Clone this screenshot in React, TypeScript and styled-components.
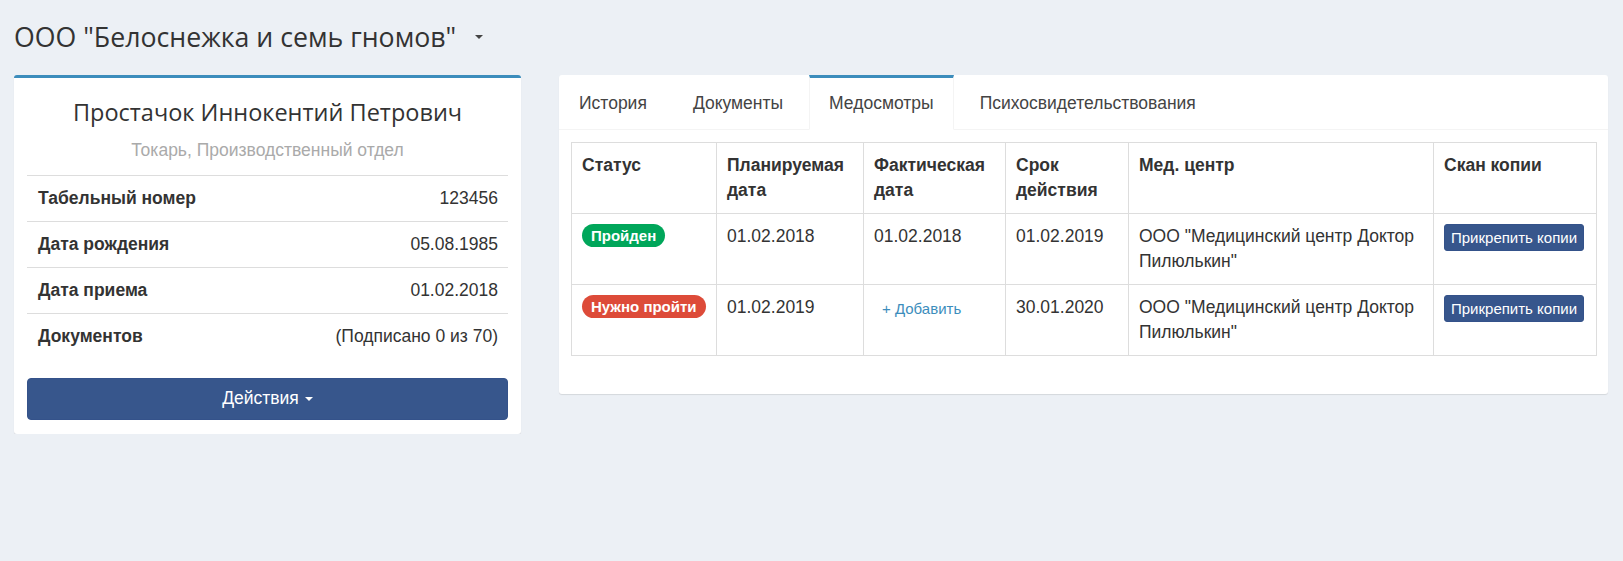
import styled, { createGlobalStyle } from 'styled-components';

const GlobalStyle = createGlobalStyle`
	body {
		margin: 0;
		background: #ecf0f5;
		font-family: 'Liberation Sans', Arial, sans-serif;
		font-size: 17.5px;
		color: #333;
	}
`;

const Page = styled.div`
	padding: 20px 15px 0 14px;
`;

const Header = styled.div`
	display: flex;
	align-items: center;
	height: 33px;
	margin-bottom: 22px;
`;

const Title = styled.h1`
	margin: 0;
	font-family: 'Open Sans', 'Noto Sans', sans-serif;
	font-weight: 400;
	font-size: 26.7px;
	line-height: 33px;
	color: #333;
`;

const Caret = styled.span<{ $color?: string; $size?: number }>`
	display: inline-block;
	width: 0;
	height: 0;
	border-top: ${(p) => p.$size || 4}px solid ${(p) => p.$color || '#444'};
	border-left: ${(p) => p.$size || 4}px solid transparent;
	border-right: ${(p) => p.$size || 4}px solid transparent;
	vertical-align: middle;
`;

const TitleCaret = styled.span`
	margin-left: 19px;
	display: flex;
	align-items: center;
`;

const Columns = styled.div`
	display: flex;
	align-items: flex-start;
	gap: 38px;
`;

const Box = styled.div<{ $accent?: boolean }>`
	background: #fff;
	border-radius: 3px;
	border-top: ${(p) => (p.$accent ? '3px solid #3c8dbc' : 'none')};
	box-shadow: 0 1px 1px rgba(0, 0, 0, 0.1);
`;

const ProfileBox = styled(Box)`
	width: 507px;
	flex: none;
	padding: 12px 13px 14px 13px;
	box-sizing: border-box;
`;

const Name = styled.h3`
	margin: 8px 0 0;
	text-align: center;
	font-family: 'Open Sans', 'Noto Sans', sans-serif;
	font-weight: 400;
	font-size: 23.5px;
	line-height: 28px;
	color: #333;
`;

const Position = styled.p`
	margin: 12px 0 12px;
	text-align: center;
	line-height: 25px;
	color: #aaa;
`;

const InfoList = styled.ul`
	list-style: none;
	margin: 0;
	padding: 0;
`;

const InfoRow = styled.li`
	display: flex;
	justify-content: space-between;
	padding: 10px 10px 10px 11px;
	line-height: 25px;
	border-top: 1px solid #ddd;
	&:last-child {
		padding-bottom: 9px;
	}
	b {
		font-weight: 700;
	}
`;

const ActionButton = styled.button`
	display: flex;
	align-items: center;
	justify-content: center;
	gap: 6px;
	width: 100%;
	margin-top: 20px;
	padding: 7px 12px 8px;
	font-family: inherit;
	font-size: 17.5px;
	line-height: 25px;
	color: #fff;
	background: #37568c;
	border: 1px solid #34528a;
	border-radius: 4px;
	cursor: pointer;
`;

const TabsBox = styled(Box)`
	flex: 1;
	min-width: 0;
`;

const TabBar = styled.ul`
	display: flex;
	list-style: none;
	margin: 0;
	padding: 0;
	border-bottom: 1px solid #f4f4f4;
`;

const Tab = styled.li<{ $active?: boolean }>`
	margin-right: 6px;
	margin-bottom: -1px;
	padding: 13px 19px;
	line-height: 25px;
	color: #444;
	border-top: 3px solid ${(p) => (p.$active ? '#3c8dbc' : 'transparent')};
	border-left: 1px solid ${(p) => (p.$active ? '#f4f4f4' : 'transparent')};
	border-right: 1px solid ${(p) => (p.$active ? '#f4f4f4' : 'transparent')};
	border-bottom: 1px solid ${(p) => (p.$active ? '#fff' : 'transparent')};
	background: ${(p) => (p.$active ? '#fff' : 'transparent')};
	cursor: pointer;
`;

const TabContent = styled.div`
	padding: 12px 12px 38px 12px;
`;

const Table = styled.table`
	width: 100%;
	border-collapse: collapse;
	table-layout: fixed;
	th,
	td {
		border: 1px solid #ddd;
		padding: 10px;
		line-height: 25px;
		text-align: left;
		vertical-align: top;
	}
	th {
		font-weight: 700;
	}
`;

const Col = styled.col<{ $w: number }>`
	width: ${(p) => p.$w}px;
`;

const Badge = styled.span<{ $tone: 'green' | 'red' }>`
	display: inline-block;
	padding: 4px 9px;
	font-size: 15px;
	font-weight: 700;
	line-height: 15px;
	color: #fff;
	border-radius: 12px;
	background: ${(p) => (p.$tone === 'green' ? '#00a65a' : '#dd4b39')};
	vertical-align: 1px;
`;

const AddLink = styled.button`
	margin-left: 1px;
	padding: 1px 6px;
	font-family: inherit;
	font-size: 15px;
	line-height: 22px;
	color: #3c8dbc;
	background: none;
	border: 1px solid transparent;
	cursor: pointer;
	vertical-align: -1px;
`;

const SmallButton = styled.button`
	padding: 1px 6px;
	font-family: inherit;
	font-size: 15px;
	line-height: 23px;
	color: #fff;
	background: #37568c;
	border: 1px solid #34528a;
	border-radius: 3px;
	cursor: pointer;
	white-space: nowrap;
`;

export default function App() {
	const info = [
		{ label: 'Табельный номер', value: '123456' },
		{ label: 'Дата рождения', value: '05.08.1985' },
		{ label: 'Дата приема', value: '01.02.2018' },
		{ label: 'Документов', value: '(Подписано 0 из 70)' },
	];

	const tabs = ['История', 'Документы', 'Медосмотры', 'Психосвидетельствования'];

	const exams = [
		{
			status: 'Пройден',
			tone: 'green' as const,
			planned: '01.02.2018',
			actual: '01.02.2018',
			until: '01.02.2019',
			center: 'ООО "Медицинский центр Доктор Пилюлькин"',
		},
		{
			status: 'Нужно пройти',
			tone: 'red' as const,
			planned: '01.02.2019',
			actual: '',
			until: '30.01.2020',
			center: 'ООО "Медицинский центр Доктор Пилюлькин"',
		},
	];

	return (
		<>
			<GlobalStyle />
			<Page>
				<Header>
					<Title>ООО "Белоснежка и семь гномов"</Title>
					<TitleCaret>
						<Caret />
					</TitleCaret>
				</Header>
				<Columns>
					<ProfileBox $accent>
						<Name>Простачок Иннокентий Петрович</Name>
						<Position>Токарь, Производственный отдел</Position>
						<InfoList>
							{info.map((row) => (
								<InfoRow key={row.label}>
									<b>{row.label}</b>
									<span>{row.value}</span>
								</InfoRow>
							))}
						</InfoList>
						<ActionButton>
							Действия <Caret $color='#fff' $size={4} />
						</ActionButton>
					</ProfileBox>
					<TabsBox>
						<TabBar>
							{tabs.map((t) => (
								<Tab key={t} $active={t === 'Медосмотры'}>
									{t}
								</Tab>
							))}
						</TabBar>
						<TabContent>
							<Table>
								<colgroup>
									<Col $w={145} />
									<Col $w={147} />
									<Col $w={142} />
									<Col $w={123} />
									<Col $w={305} />
									<Col $w={163} />
								</colgroup>
								<thead>
									<tr>
										<th>Статус</th>
										<th>Планируемая дата</th>
										<th>Фактическая дата</th>
										<th>Срок действия</th>
										<th>Мед. центр</th>
										<th>Скан копии</th>
									</tr>
								</thead>
								<tbody>
									{exams.map((e, i) => (
										<tr key={i}>
											<td>
												<Badge $tone={e.tone}>{e.status}</Badge>
											</td>
											<td>{e.planned}</td>
											<td>{e.actual || <AddLink>+ Добавить</AddLink>}</td>
											<td>{e.until}</td>
											<td>{e.center}</td>
											<td>
												<SmallButton>Прикрепить копии</SmallButton>
											</td>
										</tr>
									))}
								</tbody>
							</Table>
						</TabContent>
					</TabsBox>
				</Columns>
			</Page>
		</>
	);
}
